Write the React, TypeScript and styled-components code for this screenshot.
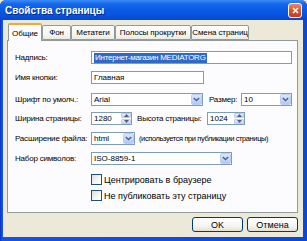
import styled, { createGlobalStyle } from "styled-components";

const Global = createGlobalStyle`
  html, body { margin: 0; padding: 0; background: #ece9d8; }
  body { font-family: "Liberation Sans", Arial, sans-serif; }
`;

const Window = styled.div`
  width: 307px;
  height: 241px;
  display: flex;
  flex-direction: column;
  background: linear-gradient(90deg, #0831c4 0px, #1553e0 2px, #0a48d8 100%);
  border-radius: 6px 6px 0 0;
  overflow: hidden;
`;

const TitleBar = styled.div`
  height: 20px;
  flex: none;
  display: flex;
  align-items: center;
  justify-content: space-between;
  padding: 0 5px 0 5px;
  background: linear-gradient(180deg, #3b8cf6 0%, #1366ea 20%, #0a58e4 55%, #0552de 80%, #0a46cc 100%);
`;

const Title = styled.span`
  color: #fff;
  font-weight: bold;
  font-size: 10px;
  text-shadow: 1px 1px 0 #0a2a8a;
`;

const CloseBtn = styled.div`
  width: 12px;
  height: 13px;
  border: 1px solid #fff;
  border-radius: 3px;
  background: linear-gradient(180deg, #e9896a 0%, #d9532f 50%, #c53d1b 100%);
  display: flex;
  align-items: center;
  justify-content: center;
`;

const Body = styled.div`
  flex: 1;
  margin: 0 4px 4px 3px;
  background: #ece9d8;
  display: flex;
  flex-direction: column;
  padding: 3px 5px 5px 4px;
`;

const TabStrip = styled.div`
  display: flex;
  align-items: flex-end;
  height: 17px;
  padding-left: 1px;
`;

const Tab = styled.div<{ $active?: boolean; $w: number }>`
  box-sizing: border-box;
  width: ${(p) => p.$w}px;
  height: ${(p) => (p.$active ? 18 : 15)}px;
  margin-bottom: ${(p) => (p.$active ? -1 : 0)}px;
  border: 1px solid #919b9c;
  border-bottom: ${(p) => (p.$active ? "none" : "1px solid #919b9c")};
  border-top: ${(p) => (p.$active ? "2px solid #f3a63a" : "1px solid #919b9c")};
  border-radius: 2px 2px 0 0;
  background: ${(p) => (p.$active ? "#fcfcfe" : "linear-gradient(180deg, #fefefe 0%, #f5f4ef 70%, #ebe9e0 100%)")};
  font-size: 8px;
  letter-spacing: -0.1px;
  color: #000;
  display: flex;
  align-items: center;
  justify-content: center;
  white-space: nowrap;
  position: relative;
  z-index: ${(p) => (p.$active ? 2 : 1)};
`;

const Panel = styled.div`
  height: 173px;
  box-sizing: border-box;
  border: 1px solid #919b9c;
  background: #fcfcfe;
  padding: 10px 5px 0 7px;
  display: flex;
  flex-direction: column;
`;

const Row = styled.div<{ $gap?: number }>`
  display: flex;
  align-items: center;
  height: 13px;
  margin-bottom: ${(p) => p.$gap ?? 7}px;
`;

const Label = styled.span<{ $w?: number }>`
  width: ${(p) => p.$w ?? 76}px;
  flex: none;
  font-size: 8px;
  letter-spacing: -0.2px;
  color: #000;
  white-space: nowrap;
`;

const Note = styled.span`
  font-size: 7.5px;
  color: #000;
  white-space: nowrap;
  margin-left: 4px;
  letter-spacing: -0.4px;
`;

const Box = styled.div<{ $w: number }>`
  box-sizing: border-box;
  width: ${(p) => p.$w}px;
  height: 13px;
  border: 1px solid #7f9db9;
  background: #fff;
  display: flex;
  align-items: center;
  font-size: 8px;
  color: #000;
  padding-left: 2px;
  flex: none;
  overflow: hidden;
  white-space: nowrap;
`;

const Selected = styled.span`
  background: #316ac5;
  color: #fff;
  padding: 0 1px;
  line-height: 10px;
  letter-spacing: -0.25px;
`;

const Value = styled.span`
  flex: 1;
  overflow: hidden;
`;

const DropBtn = styled.div`
  width: 11px;
  height: 11px;
  flex: none;
  box-sizing: border-box;
  border: 1px solid #b9cdf5;
  border-radius: 2px;
  background: linear-gradient(180deg, #dbe6fd 0%, #c3d5fc 60%, #b3c8f7 100%);
  display: flex;
  align-items: center;
  justify-content: center;
`;

const SpinCol = styled.div`
  width: 10px;
  height: 11px;
  flex: none;
  display: flex;
  flex-direction: column;
  gap: 1px;
`;

const SpinBtn = styled.div`
  flex: 1;
  box-sizing: border-box;
  border: 1px solid #b9cdf5;
  border-radius: 1px;
  background: linear-gradient(180deg, #e2ebfe 0%, #c3d5fc 100%);
  display: flex;
  align-items: center;
  justify-content: center;
`;

const Gap = styled.span<{ $w: number }>`
  width: ${(p) => p.$w}px;
  flex: none;
`;

const Check = styled.label`
  display: flex;
  align-items: center;
  gap: 2px;
  font-size: 9px;
  color: #000;
  margin-left: 76px;
`;

const CheckBox = styled.span`
  width: 9px;
  height: 9px;
  border: 1px solid #1c5180;
  background: linear-gradient(135deg, #dcdcd7 0%, #f6f6f3 60%, #fff 100%);
  flex: none;
`;

const Buttons = styled.div`
  display: flex;
  justify-content: flex-end;
  gap: 4px;
  margin-top: 4px;
`;

const Button = styled.button`
  box-sizing: border-box;
  width: 51px;
  height: 15px;
  border: 1px solid #003c74;
  border-radius: 3px;
  background: linear-gradient(180deg, #ffffff 0%, #f6f5f0 60%, #e3e0d3 100%);
  font-family: "Liberation Sans", Arial, sans-serif;
  font-size: 9px;
  color: #000;
  padding: 0;
`;

const Chevron = () => (
  <svg width="7" height="5" viewBox="0 0 7 5">
    <path d="M0.8 1 L3.5 3.6 L6.2 1" fill="none" stroke="#4d6185" strokeWidth="1.4" />
  </svg>
);

const Arrow = ({ up }: { up?: boolean }) => (
  <svg width="5" height="3" viewBox="0 0 5 3">
    <path d={up ? "M0 3 L2.5 0 L5 3 Z" : "M0 0 L2.5 3 L5 0 Z"} fill="#4d6185" />
  </svg>
);

const Select = ({ w, value }: { w: number; value: string }) => (
  <Box $w={w}>
    <Value>{value}</Value>
    <DropBtn>
      <Chevron />
    </DropBtn>
  </Box>
);

const Spin = ({ w, value }: { w: number; value: string }) => (
  <Box $w={w}>
    <Value>{value}</Value>
    <SpinCol>
      <SpinBtn>
        <Arrow up />
      </SpinBtn>
      <SpinBtn>
        <Arrow />
      </SpinBtn>
    </SpinCol>
  </Box>
);

const tabs = [
  { name: "Общие", w: 34 },
  { name: "Фон", w: 29 },
  { name: "Метатеги", w: 44 },
  { name: "Полосы прокрутки", w: 76 },
  { name: "Смена страниц", w: 58 },
];

export default function App() {
  return (
    <>
      <Global />
      <Window>
        <TitleBar>
          <Title>Свойства страницы</Title>
          <CloseBtn>
            <svg width="7" height="7" viewBox="0 0 7 7">
              <path d="M1 1 L6 6 M6 1 L1 6" stroke="#fff" strokeWidth="1.5" />
            </svg>
          </CloseBtn>
        </TitleBar>
        <Body>
          <TabStrip>
            {tabs.map((t, i) => (
              <Tab key={t.name} $active={i === 0} $w={t.w}>
                {t.name}
              </Tab>
            ))}
          </TabStrip>
          <Panel>
            <Row>
              <Label>Надпись:</Label>
              <Box $w={201}>
                <Selected>Интернет-магазин MEDIATORG</Selected>
              </Box>
            </Row>
            <Row $gap={9}>
              <Label>Имя кнопки:</Label>
              <Box $w={113}>Главная</Box>
            </Row>
            <Row $gap={6}>
              <Label>Шрифт по умолч.:</Label>
              <Select w={112} value="Arial" />
              <Gap $w={6} />
              <Label $w={32}>Размер:</Label>
              <Select w={51} value="10" />
            </Row>
            <Row>
              <Label>Ширина страницы:</Label>
              <Spin w={41} value="1280" />
              <Gap $w={5} />
              <Label $w={70}>Высота страницы:</Label>
              <Spin w={38} value="1024" />
            </Row>
            <Row>
              <Label>Расширение файла:</Label>
              <Select w={44} value="html" />
              <Note>(используется при публикации страницы)</Note>
            </Row>
            <Row $gap={8}>
              <Label>Набор символов:</Label>
              <Select w={141} value="ISO-8859-1" />
            </Row>
            <Row $gap={3}>
              <Check>
                <CheckBox />
                Центрировать в браузере
              </Check>
            </Row>
            <Row>
              <Check>
                <CheckBox />
                Не публиковать эту страницу
              </Check>
            </Row>
          </Panel>
          <Buttons>
            <Button>OK</Button>
            <Button>Отмена</Button>
          </Buttons>
        </Body>
      </Window>
    </>
  );
}
